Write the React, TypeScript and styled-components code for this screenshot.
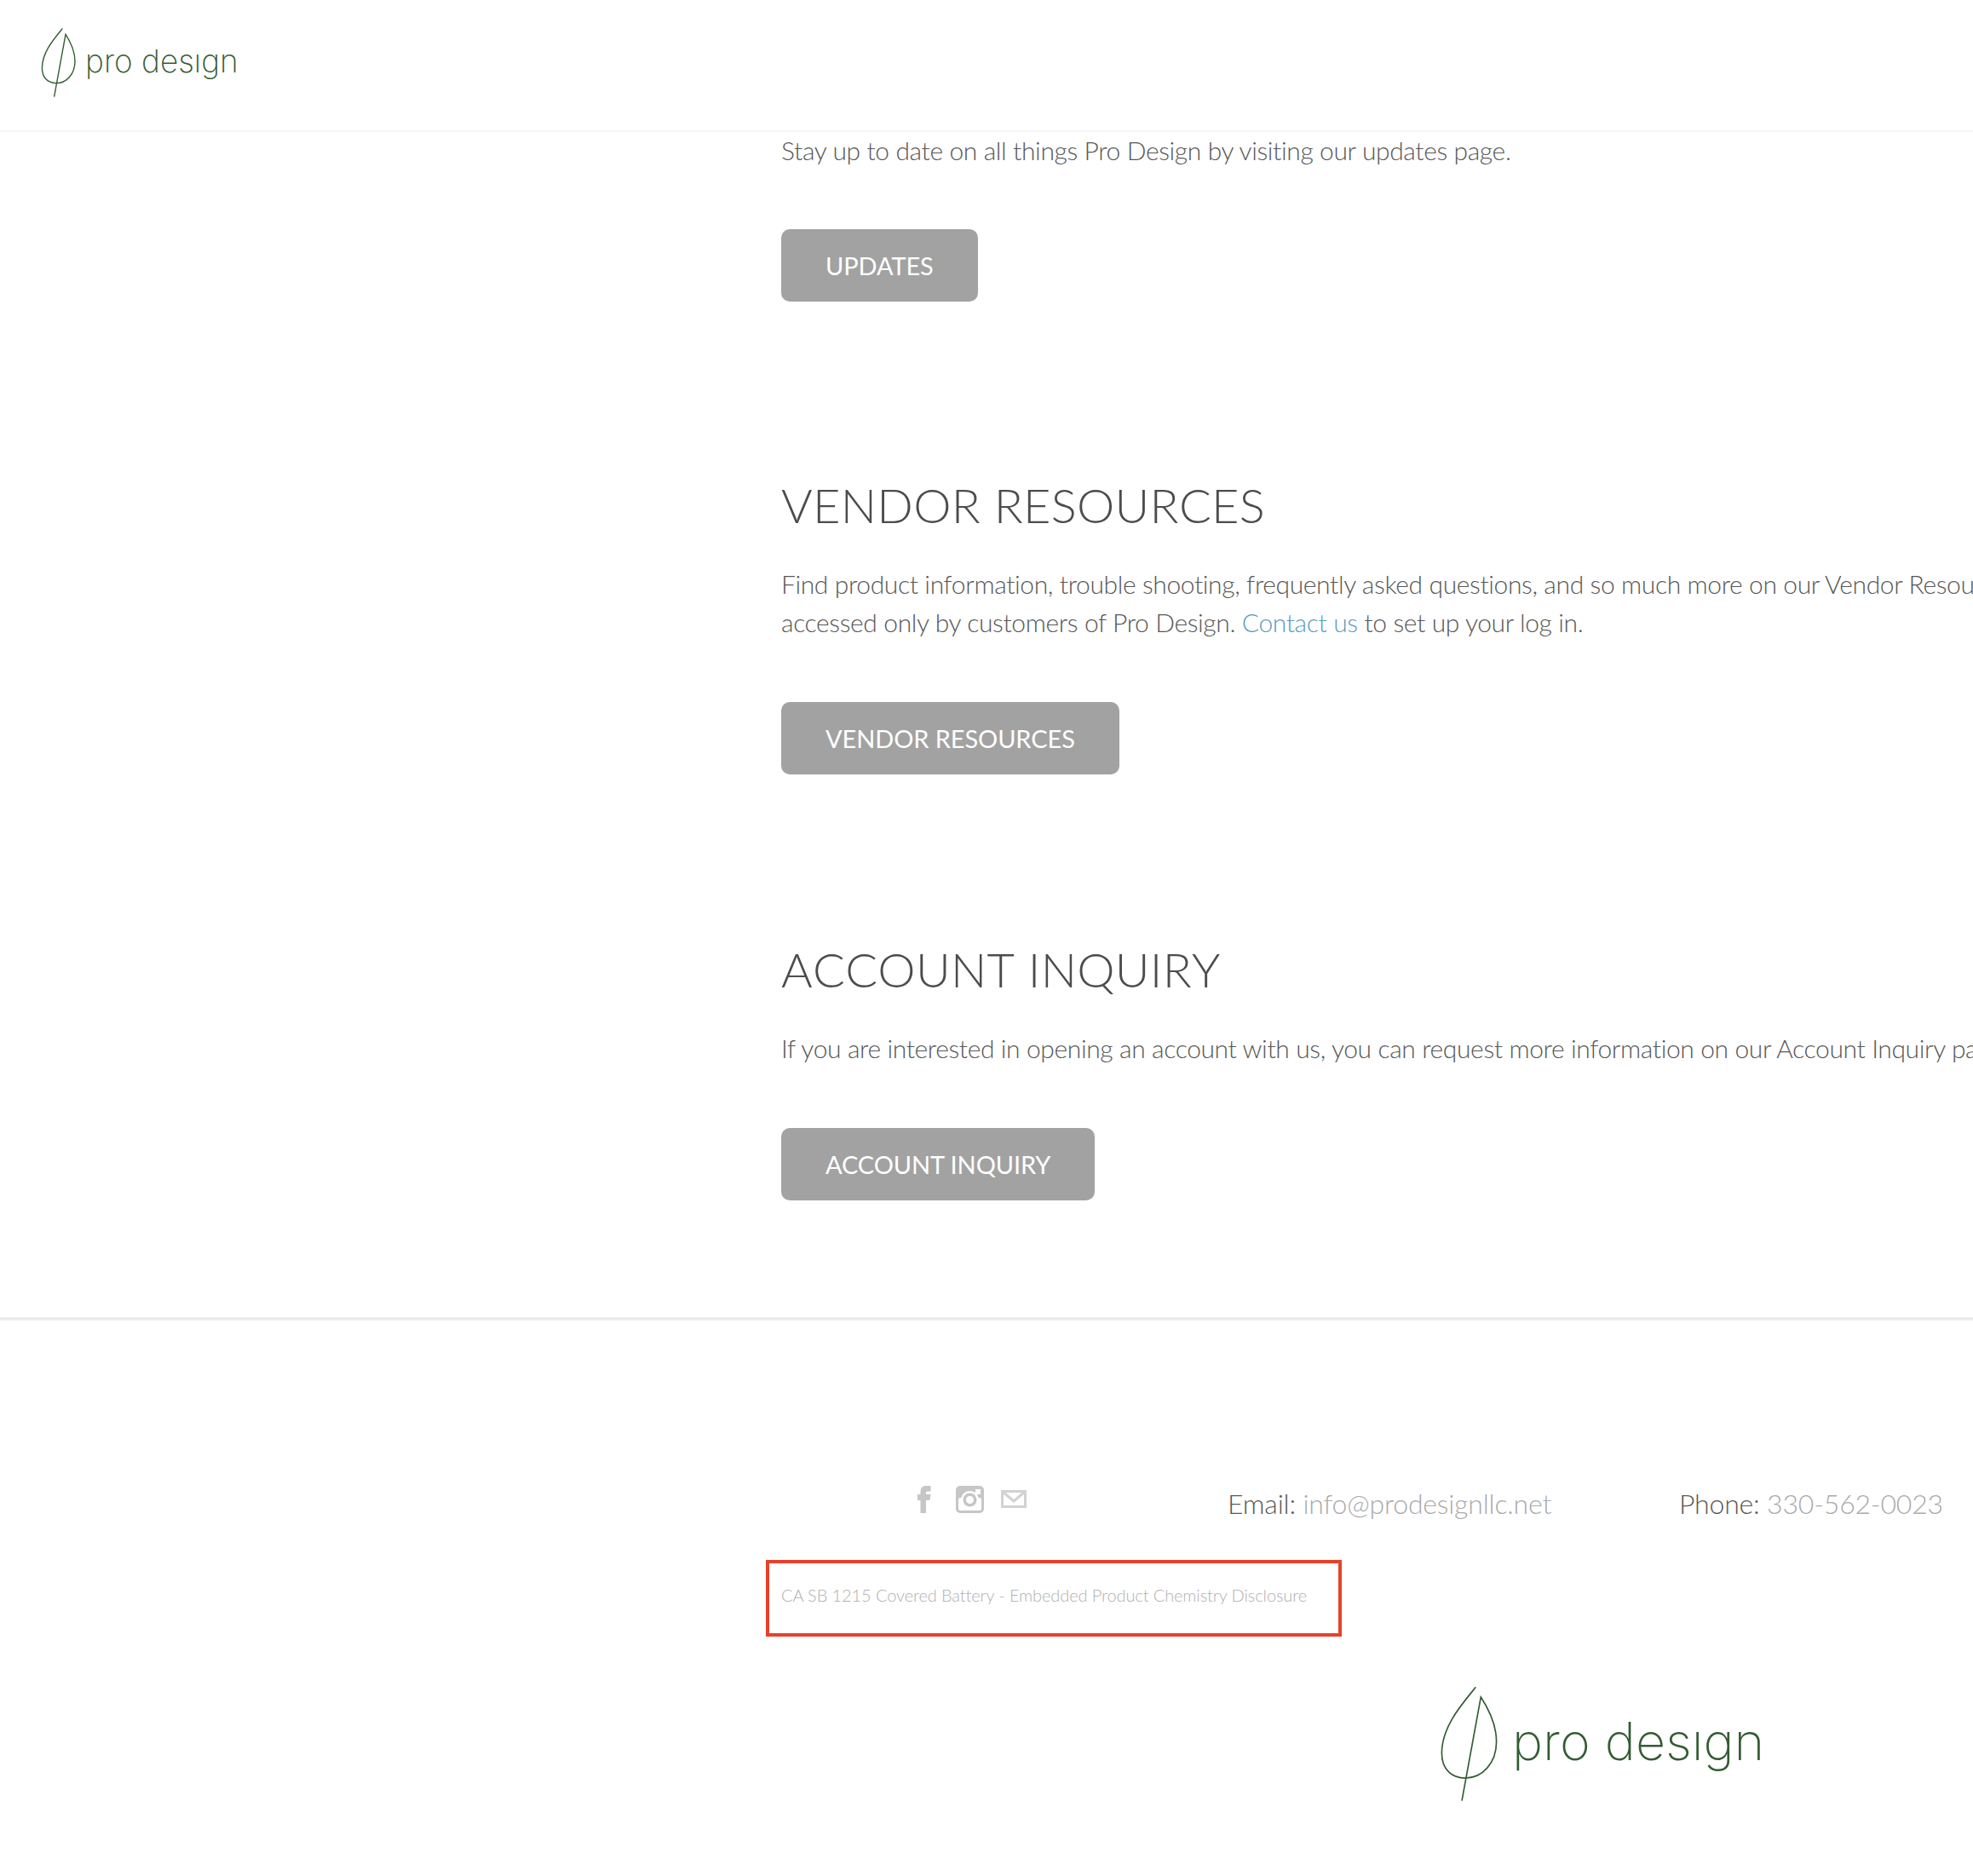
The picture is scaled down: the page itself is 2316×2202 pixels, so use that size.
import React from "react";
import styled, { createGlobalStyle } from "styled-components";

const Global = createGlobalStyle`
  html, body { margin: 0; padding: 0; background: #fff; }
  body { font-family: Lato, "Liberation Sans", sans-serif; overflow: hidden; }
`;

const Page = styled.div`
  width: 2316px;
  height: 2202px;
  overflow: hidden;
  display: flex;
  flex-direction: column;
`;

const Header = styled.header`
  height: 155px;
  flex: none;
  box-sizing: border-box;
  border-bottom: 2px solid #f6f6f6;
  padding: 32px 0 0 48px;
`;

const LogoWrap = styled.div<{ $h: number }>`
  display: flex;
  align-items: flex-start;
  height: ${(p) => p.$h}px;
`;

const Word = styled.span<{ $size: number; $ml: number; $mt: number }>`
  font-family: Inter, Lato, sans-serif;
  font-weight: 200;
  font-size: ${(p) => p.$size}px;
  line-height: 1;
  color: #335c32;
  margin-left: ${(p) => p.$ml}px;
  margin-top: ${(p) => p.$mt}px;
  white-space: nowrap;
`;

const Main = styled.main`
  padding-left: 917px;
  display: flex;
  flex-direction: column;
  align-items: flex-start;
  flex: none;
`;

const Section = styled.section<{ $top: number }>`
  margin-top: ${(p) => p.$top}px;
  display: flex;
  flex-direction: column;
  align-items: flex-start;
`;

const Heading = styled.h2`
  margin: 0 0 35px;
  font-weight: 300;
  font-size: 56px;
  line-height: 70px;
  letter-spacing: 0.3px;
  color: #4c4c4c;
  white-space: nowrap;
  font-kerning: none;
`;

const Body = styled.p<{ $lh?: number }>`
  margin: 0;
  font-weight: 300;
  font-size: 30px;
  line-height: ${(p) => p.$lh ?? 45}px;
  letter-spacing: -0.38px;
  color: #585858;
  white-space: nowrap;
`;

const TextLink = styled.a`
  color: #5a9cc0;
`;

const Button = styled.a`
  margin-top: 71px;
  height: 85px;
  padding: 0 52px;
  display: flex;
  align-items: center;
  background: #a2a2a2;
  border-radius: 10px;
  color: #fff;
  font-size: 29px;
  font-weight: 400;
  letter-spacing: -0.1px;
  white-space: nowrap;
`;

const Divider = styled.hr`
  margin: 137px 0 0;
  border: 0;
  height: 4px;
  background: #ececec;
  flex: none;
`;

const Footer = styled.footer`
  padding-top: 194px;
  display: flex;
  flex-direction: column;
  flex: none;
`;

const ContactRow = styled.div`
  display: flex;
  align-items: flex-start;
  padding-left: 1077px;
  height: 87px;
`;

const Social = styled.div`
  flex: none;
  width: 364px;
  display: grid;
  grid-template-columns: 45px 53px 30px;
  align-items: start;
`;

const SocialIcon = styled.svg<{ $mt?: number }>`
  display: block;
  margin-top: ${(p) => p.$mt ?? 0}px;
`;

const Contact = styled.div<{ $w: number }>`
  flex: none;
  font-weight: 300;
  font-size: 32px;
  line-height: 41px;
  letter-spacing: -0.2px;
  color: #585858;
  white-space: nowrap;
  width: ${(p) => p.$w}px;
`;

const Muted = styled.span`
  color: #aaa;
`;

const Disclosure = styled.div`
  margin-left: 899px;
  width: 676px;
  height: 90px;
  box-sizing: border-box;
  border: 4px solid #e8412a;
  padding: 0 0 8px 14px;
  display: flex;
  align-items: center;
  font-weight: 300;
  font-size: 20px;
  letter-spacing: -0.1px;
  color: #b0b0b0;
  white-space: nowrap;
`;

const FooterLogo = styled.div`
  margin: 57px 0 0 1690px;
`;

const LeafSvg = styled.svg`
  display: block;
  flex: none;
`;

const Leaf = ({ w, h, sw }: { w: number; h: number; sw: number }) => (
  <LeafSvg width={w} height={h} viewBox="90 85 210 415" fill="none" stroke="#335c32" strokeWidth={sw}>
    <path d="M217 92C170 150 97 230 97 325C97 385 135 413 180 413C240 413 290 360 290 285C290 220 260 165 235 127L168 493" />
  </LeafSvg>
);

const Logo = ({ w, h, sw, size, ml, mt }: { w: number; h: number; sw: number; size: number; ml: number; mt: number }) => (
  <LogoWrap $h={h}>
    <Leaf w={w} h={h} sw={sw} />
    <Word $size={size} $ml={ml} $mt={mt}>pro desıgn</Word>
  </LogoWrap>
);

export default function App() {
  return (
    <Page>
      <Global />
      <Header>
        <Logo w={42} h={83} sw={7} size={37} ml={10} mt={21} />
      </Header>
      <Main>
        <Body $lh={43}>Stay up to date on all things Pro Design by visiting our updates page.</Body>
        <Button>UPDATES</Button>
        <Section $top={204}>
          <Heading>VENDOR RESOURCES</Heading>
          <Body>
            Find product information, trouble shooting, frequently asked questions, and so much more on our Vendor Resources page. This page can be
            <br />
            accessed only by customers of Pro Design. <TextLink>Contact us</TextLink> to set up your log in.
          </Body>
          <Button>VENDOR RESOURCES</Button>
        </Section>
        <Section $top={194}>
          <Heading>ACCOUNT INQUIRY</Heading>
          <Body>If you are interested in opening an account with us, you can request more information on our Account Inquiry page.</Body>
          <Button>ACCOUNT INQUIRY</Button>
        </Section>
      </Main>
      <Divider />
      <Footer>
        <ContactRow>
          <Social>
            <SocialIcon width="16" height="32" viewBox="0 0 16 32" fill="#c6c6c6">
              <path d="M3.500 32V17H0v-7h3.500V7C3.500 2 6 0 10 0h5.500v6.500H12c-1.500 0-2 .7-2 2V10h5.500l-1 7H10v15z" />
            </SocialIcon>
            <SocialIcon width="33" height="32" viewBox="0 0 33 32">
              <rect width="33" height="32" rx="5" fill="#c6c6c6" />
              <rect x="3" y="14" width="27" height="15" rx="2" fill="#fff" />
              <rect x="23" y="4" width="6" height="6" fill="#fff" />
              <circle cx="16.500" cy="16.500" r="10.500" fill="#fff" />
              <circle cx="16.500" cy="16.500" r="8" fill="#c6c6c6" />
              <circle cx="16.500" cy="16.500" r="4.500" fill="#fff" />
            </SocialIcon>
            <SocialIcon width="30" height="21" viewBox="0 0 30 21" $mt={5} fill="none" stroke="#d2d2d2" strokeWidth="3">
              <rect x="1.500" y="1.500" width="27" height="18" />
              <path d="M2 2l13 11L28 2" />
            </SocialIcon>
          </Social>
          <Contact $w={530}>Email: <Muted>info@prodesignllc.net</Muted></Contact>
          <Contact $w={320}>Phone: <Muted>330-562-0023</Muted></Contact>
        </ContactRow>
        <Disclosure>CA SB 1215 Covered Battery - Embedded Product Chemistry Disclosure</Disclosure>
        <FooterLogo>
          <Logo w={70} h={138} sw={5} size={61} ml={15} mt={36} />
        </FooterLogo>
      </Footer>
    </Page>
  );
}
